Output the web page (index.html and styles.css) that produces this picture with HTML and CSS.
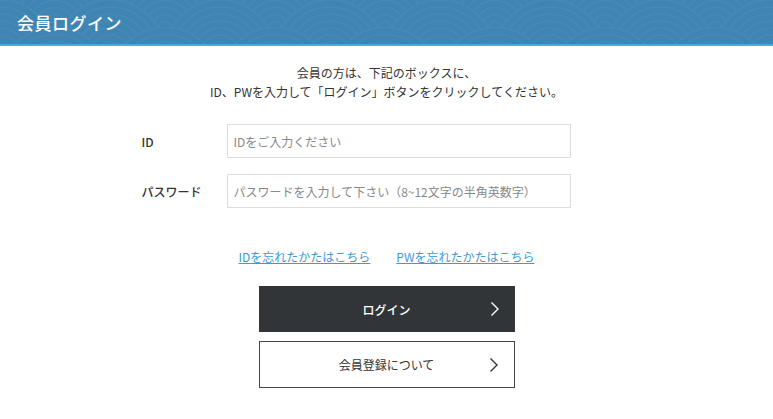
FILE: index.html
```html
<!DOCTYPE html>
<html lang="ja">
<head>
    <meta charset="UTF-8">
    <meta name="viewport" content="width=device-width, initial-scale=1.0">
    <title>会員ログイン</title>
    <link rel="stylesheet" href="styles.css">
</head>
<body>
    <header class="page-header">
        <h1>会員ログイン</h1>
    </header>

    <main class="login">
        <p class="lead">会員の方は、下記のボックスに、<br>ID、PWを入力して「ログイン」ボタンをクリックしてください。</p>

        <form class="login-form">
            <div class="field">
                <label for="login_id">ID</label>
                <input type="text" id="login_id" name="login_id" placeholder="IDをご入力ください">
            </div>
            <div class="field">
                <label for="login_pw">パスワード</label>
                <input type="password" id="login_pw" name="login_pw" placeholder="パスワードを入力して下さい（8~12文字の半角英数字）">
            </div>

            <div class="forgot">
                <a href="#">IDを忘れたかたはこちら</a>
                <a href="#">PWを忘れたかたはこちら</a>
            </div>

            <div class="actions">
                <button type="submit" class="btn btn-dark">
                    ログイン
                    <svg class="chev" width="10" height="16" viewBox="0 0 10 16"><polyline points="1.5,1.5 8,8 1.5,14.5" fill="none" stroke="currentColor" stroke-width="1.4"/></svg>
                </button>
                <a href="#" class="btn btn-light">
                    会員登録について
                    <svg class="chev" width="10" height="16" viewBox="0 0 10 16"><polyline points="1.5,1.5 8,8 1.5,14.5" fill="none" stroke="currentColor" stroke-width="1.4"/></svg>
                </a>
            </div>
        </form>
    </main>
</body>
</html>
```

FILE: styles.css
```css
body {
    margin: 0;
    font-family: "Noto Sans CJK JP", "Noto Sans", sans-serif;
    color: #333;
    background-color: #fff;
}

.page-header {
    height: 44px;
    background-color: #3f85b3;
    background-image: url("data:image/svg+xml,%3Csvg xmlns='http://www.w3.org/2000/svg' width='110' height='55'%3E%3Cdefs%3E%3Cg id='w' fill='none' stroke='%234589b6' stroke-width='1.6'%3E%3Ccircle r='55' fill='%233f85b3'/%3E%3Ccircle r='48'/%3E%3Ccircle r='41'/%3E%3Ccircle r='34'/%3E%3Ccircle r='27'/%3E%3Ccircle r='20'/%3E%3Ccircle r='13'/%3E%3Ccircle r='6'/%3E%3C/g%3E%3C/defs%3E%3Cuse href='%23w' x='55' y='-27.5'/%3E%3Cuse href='%23w' x='0' y='0'/%3E%3Cuse href='%23w' x='110' y='0'/%3E%3Cuse href='%23w' x='55' y='27.5'/%3E%3Cuse href='%23w' x='0' y='55'/%3E%3Cuse href='%23w' x='110' y='55'/%3E%3Cuse href='%23w' x='55' y='82.5'/%3E%3C/svg%3E");
    border-bottom: 2px solid #46ace0;
    display: flex;
    align-items: center;
    padding-left: 17px;
}

.page-header h1 {
    margin: 0;
    color: #fff;
    font-size: 17px;
    font-weight: 500;
    letter-spacing: 0.5px;
}

.login {
    padding-top: 17px;
}

.lead {
    margin: 0;
    text-align: center;
    font-size: 12px;
    line-height: 19px;
}

.login-form {
    width: 490px;
    margin: 23px auto 0;
}

.field {
    display: flex;
    align-items: center;
    margin-bottom: 16px;
}

.field label {
    width: 85px;
    font-size: 12px;
    font-weight: 500;
}

.field input {
    width: 344px;
    height: 34px;
    box-sizing: border-box;
    border: 1px solid #ddd;
    padding: 0 6px;
    font-family: inherit;
    font-size: 12px;
    color: #333;
}

.field input::placeholder {
    color: #888;
}

.forgot {
    display: flex;
    justify-content: center;
    gap: 26px;
    margin-top: 40px;
    font-size: 12px;
}

.forgot a {
    color: #3a9bd8;
}

.actions {
    display: flex;
    flex-direction: column;
    align-items: center;
    gap: 9px;
    margin-top: 21px;
}

.btn {
    position: relative;
    display: flex;
    align-items: center;
    justify-content: center;
    width: 256px;
    height: 46px;
    box-sizing: border-box;
    font-family: inherit;
    font-size: 12px;
    text-decoration: none;
    cursor: pointer;
}

.btn-dark {
    background-color: #323538;
    color: #fff;
    border: none;
    font-weight: 500;
}

.btn-light {
    height: 47px;
    background-color: #fff;
    color: #333;
    border: 1px solid #444;
}

.chev {
    position: absolute;
    right: 15px;
    top: 15px;
}
```
